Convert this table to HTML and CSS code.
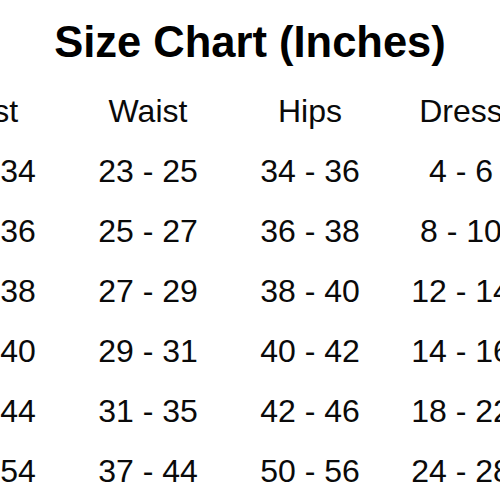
FILE: index.html
```html
<!DOCTYPE html>
<html lang="en">
<head>
<meta charset="utf-8">
<title>Size Chart</title>
<link rel="stylesheet" href="styles.css">
</head>
<body>
<main class="page">
  <h1 class="title">Size Chart (Inches)</h1>
  <div class="chart">
    <div class="cell head">Bust</div><div class="cell head">Waist</div><div class="cell head">Hips</div><div class="cell head">Dress</div>
    <div class="cell">32 - 34</div><div class="cell">23 - 25</div><div class="cell">34 - 36</div><div class="cell">4 - 6</div>
    <div class="cell">34 - 36</div><div class="cell">25 - 27</div><div class="cell">36 - 38</div><div class="cell">8 - 10</div>
    <div class="cell">36 - 38</div><div class="cell">27 - 29</div><div class="cell">38 - 40</div><div class="cell">12 - 14</div>
    <div class="cell">38 - 40</div><div class="cell">29 - 31</div><div class="cell">40 - 42</div><div class="cell">14 - 16</div>
    <div class="cell">40 - 44</div><div class="cell">31 - 35</div><div class="cell">42 - 46</div><div class="cell">18 - 22</div>
    <div class="cell">46 - 54</div><div class="cell">37 - 44</div><div class="cell">50 - 56</div><div class="cell">24 - 28</div>
  </div>
</main>
</body>
</html>
```

FILE: styles.css
```css
html, body {
  margin: 0;
  padding: 0;
  background: #ffffff;
}
body {
  width: 500px;
  height: 500px;
  overflow: hidden;
  font-family: "Liberation Sans", Arial, sans-serif;
  color: #0a0a0a;
}
.page {
  padding-top: 12px;
}
.title {
  margin: 0 0 9px 0;
  font-size: 43.5px;
  line-height: 60px;
  font-weight: bold;
  text-align: center;
  color: #000000;
}
.chart {
  display: grid;
  grid-template-columns: 162px 162px 162px 140px;
  grid-auto-rows: 60px;
  margin-left: -95px;
  width: 626px;
}
.cell {
  font-size: 32px;
  line-height: 60px;
  text-align: center;
  white-space: nowrap;
}
.head {
  font-size: 32px;
}
```
